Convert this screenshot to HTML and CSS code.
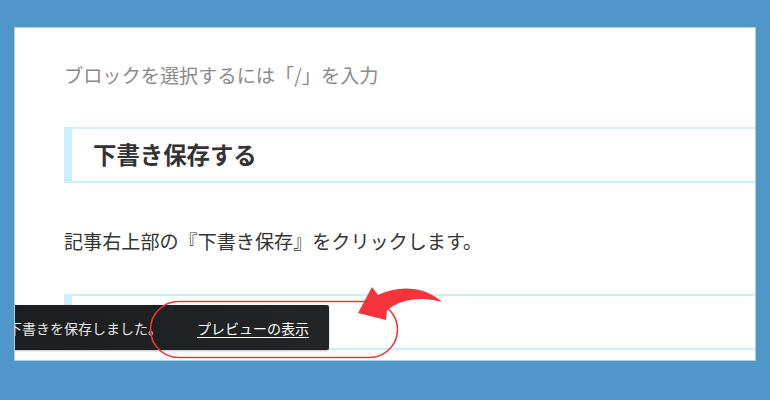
FILE: index.html
```html
<!DOCTYPE html>
<html lang="ja">
<head>
<meta charset="utf-8">
<link rel="stylesheet" href="styles.css">
</head>
<body>
<div class="page">
  <div class="panel">
    <div class="editor">
      <p class="placeholder">ブロックを選択するには「/」を入力</p>
      <div class="heading-block"><h2 class="heading">下書き保存する</h2></div>
      <p class="para">記事右上部の『下書き保存』をクリックします。</p>
      <div class="heading-block empty"></div>
    </div>
    <div class="snackbar">
      <span class="snack-text">下書きを保存しました。</span>
      <a class="snack-link">プレビューの表示</a>
    </div>
  </div>
</div>
<svg class="annotation" width="770" height="400" viewBox="0 0 770 400">
  <rect x="150.5" y="301.5" width="247" height="56" rx="28" ry="28" fill="none" stroke="#f0353a" stroke-width="1.6"/>
  <path d="M358,313 L372,287 L378,295 C398,285 425,286 442,302 C422,296 401,299 387,310 L386,320 Z" fill="#f5333a"/>
</svg>
</body>
</html>
```
FILE: styles.css
```css
html, body {
  margin: 0;
  padding: 0;
}
body {
  background: #4f97c9;
  width: 770px;
  height: 400px;
  overflow: hidden;
  position: relative;
  font-family: "Noto Sans CJK JP", "Noto Sans", sans-serif;
}
.page {
  padding: 28px 15px 0 15px;
}
.panel {
  position: relative;
  height: 332px;
  background: #ffffff;
  box-shadow: 0 0 0 1px #a6cfea;
  overflow: hidden;
}
.editor {
  padding: 33px 0 0 49px;
  margin-right: -40px;
}
.placeholder {
  margin: 0;
  font-size: 19.2px;
  line-height: 28px;
  color: #8a8a8a;
}
.heading-block {
  margin-top: 38px;
  height: 52px;
  border-top: 2px solid #cdeffb;
  border-bottom: 2px solid #cdeffb;
  border-left: 8px solid #c9eefc;
  display: flex;
  align-items: center;
  padding-left: 21px;
}
.heading {
  margin: 0;
  font-size: 23.4px;
  font-weight: 700;
  color: #333333;
  line-height: 1;
}
.para {
  margin: 43px 0 0 0;
  font-size: 19.1px;
  line-height: 30px;
  color: #333333;
}
.heading-block.empty {
  margin-top: 38px;
}
.snackbar {
  position: absolute;
  left: -23px;
  top: 277px;
  height: 45px;
  display: flex;
  align-items: center;
  gap: 35px;
  padding: 0 20px 0 16px;
  background: linear-gradient(90deg, #1c1d1e, #232425);
  border-radius: 2px;
  box-shadow: 0 1px 2px rgba(0,0,0,0.25);
  font-size: 14px;
  line-height: 20px;
}
.snack-text {
  color: #e6e6e6;
}
.snack-link {
  color: #ffffff;
  text-decoration: underline;
  text-underline-offset: 3px;
}
.annotation {
  position: absolute;
  left: 0;
  top: 0;
  pointer-events: none;
}
```
